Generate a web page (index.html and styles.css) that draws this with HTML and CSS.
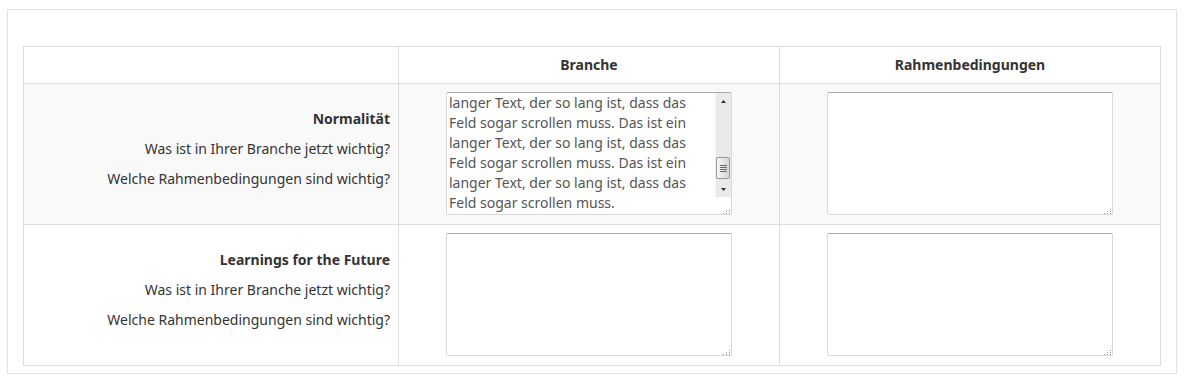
FILE: index.html
```html
<!DOCTYPE html>
<html lang="de">
<head>
<meta charset="utf-8">
<title>Matrix</title>
<link rel="stylesheet" href="styles.css">
</head>
<body>
<div class="card">
  <table class="matrix">
    <colgroup>
      <col class="col-label">
      <col class="col-field">
      <col class="col-field">
    </colgroup>
    <thead>
      <tr>
        <th></th>
        <th>Branche</th>
        <th>Rahmenbedingungen</th>
      </tr>
    </thead>
    <tbody>
      <tr class="striped">
        <td class="label">
          <p class="title">Normalität</p>
          <p>Was ist in Ihrer Branche jetzt wichtig?</p>
          <p>Welche Rahmenbedingungen sind wichtig?</p>
        </td>
        <td class="field">
          <div class="ta-wrap">
            <textarea id="branche-1" class="scrolling">Das ist ein langer Text, der so lang ist, dass das Feld sogar scrollen muss. Das ist ein langer Text, der so lang ist, dass das Feld sogar scrollen muss. Das ist ein langer Text, der so lang ist, dass das Feld sogar scrollen muss. Das ist ein langer Text, der so lang ist, dass das Feld sogar scrollen muss. Das ist ein langer Text, der so lang ist, dass das Feld sogar scrollen muss. Das ist ein langer Text, der so lang ist, dass das Feld sogar scrollen muss. Das ist ein langer Text, der so lang ist, dass das Feld sogar scrollen muss. Das ist ein langer Text, der so lang ist, dass das Feld sogar scrollen muss. Das ist ein
langer Text, der so lang ist, dass das Feld sogar scrollen muss. Das ist ein langer Text, der so lang ist, dass das Feld sogar scrollen muss. Das ist ein langer Text, der so lang ist, dass das Feld sogar scrollen muss.</textarea>
            <div class="scrollbar" aria-hidden="true">
              <div class="sb-btn sb-up"><svg width="5" height="3" viewBox="0 0 5 3"><path d="M0 3 L2.5 0 L5 3 Z" fill="#333"/></svg></div>
              <div class="sb-track">
                <div class="sb-thumb">
                  <span></span><span></span><span></span><span></span>
                </div>
              </div>
              <div class="sb-btn sb-down"><svg width="5" height="3" viewBox="0 0 5 3"><path d="M0 0 L2.5 3 L5 0 Z" fill="#333"/></svg></div>
            </div>
          </div>
        </td>
        <td class="field"><div class="ta-wrap"><textarea></textarea></div></td>
      </tr>
      <tr>
        <td class="label">
          <p class="title">Learnings for the Future</p>
          <p>Was ist in Ihrer Branche jetzt wichtig?</p>
          <p>Welche Rahmenbedingungen sind wichtig?</p>
        </td>
        <td class="field"><div class="ta-wrap"><textarea></textarea></div></td>
        <td class="field"><div class="ta-wrap"><textarea></textarea></div></td>
      </tr>
    </tbody>
  </table>
</div>
<script src="app.js"></script>
</body>
</html>
```

FILE: app.js
```js
var ta = document.getElementById('branche-1');
ta.scrollTop = ta.scrollHeight;
```

FILE: styles.css
```css
html, body {
  margin: 0;
  padding: 0;
  background: #fff;
}

body {
  font-family: "Noto Sans", "Open Sans", "Liberation Sans", sans-serif;
  font-size: 14px;
  line-height: 20px;
  color: #333;
}

.card {
  box-sizing: border-box;
  width: 1170px;
  height: 365px;
  margin: 9px 0 0 7px;
  padding: 36px 15px 8px 15px;
  border: 1px solid #e3e3e3;
  box-shadow: 0 2px 2px rgba(0, 0, 0, 0.08);
  background: #fff;
}

.matrix {
  width: 1138px;
  border-collapse: collapse;
  table-layout: fixed;
}

.col-label { width: 375px; }
.col-field { width: 381px; }

.matrix th,
.matrix td {
  border: 1px solid #dddddd;
  padding: 8px;
}

.matrix th {
  font-weight: 700;
  text-align: center;
  line-height: 20px;
}

.striped td {
  background: #f9f9f9;
}

.label {
  text-align: right;
  vertical-align: middle;
}

.label p {
  margin: 0 0 10px 0;
}

.label .title {
  font-weight: 700;
}

.field {
  vertical-align: top;
}

.ta-wrap {
  position: relative;
  width: 286px;
  margin: 0 auto 1px auto;
}

.ta-wrap textarea {
  display: block;
  box-sizing: border-box;
  width: 286px;
  height: 123px;
  margin: 0;
  padding: 0 2px;
  font-family: "Noto Sans", "Open Sans", "Liberation Sans", sans-serif;
  font-size: 14px;
  line-height: 20px;
  color: #555;
  background: #fff;
  border: 1px solid #d8d8d8;
  border-top-color: #ababab;
  border-radius: 2px;
  resize: both;
}

.ta-wrap textarea.scrolling {
  padding-right: 18px;
  padding-bottom: 1px;
  overflow-y: scroll;
  scrollbar-width: none;
}

.ta-wrap textarea::-webkit-resizer {
  background: #fff url("data:image/svg+xml;utf8,<svg xmlns='http://www.w3.org/2000/svg' width='16' height='16'><g fill='%23999'><rect x='13' y='10' width='1' height='1'/><rect x='10' y='12' width='1' height='1'/><rect x='13' y='12' width='1' height='1'/><rect x='7' y='14' width='1' height='1'/><rect x='10' y='14' width='1' height='1'/><rect x='13' y='14' width='1' height='1'/></g></svg>") no-repeat;
}

/* visual scrollbar drawn over the textarea's right edge */
.scrollbar {
  position: absolute;
  top: 1px;
  right: 1px;
  width: 16px;
  height: 104px;
  display: flex;
  flex-direction: column;
  background: #eaeaea;
  border-left: 1px solid #f3f3f3;
  box-sizing: border-box;
  pointer-events: none;
}

.sb-btn {
  height: 16px;
  flex: 0 0 16px;
  display: flex;
  align-items: center;
  justify-content: center;
}

.sb-track {
  flex: 1;
  display: flex;
  flex-direction: column;
  justify-content: flex-end;
  padding-bottom: 2px;
}

.sb-thumb {
  height: 22px;
  margin: 0 1px 0 0;
  box-sizing: border-box;
  border: 1px solid #9a9a9a;
  border-radius: 2px;
  background: linear-gradient(to right, #f7f7f7, #d6d6d6);
  display: flex;
  flex-direction: column;
  align-items: center;
  justify-content: center;
  gap: 1px;
}

.sb-thumb span {
  display: block;
  width: 7px;
  height: 1px;
  background: #6a6a6a;
}
```
